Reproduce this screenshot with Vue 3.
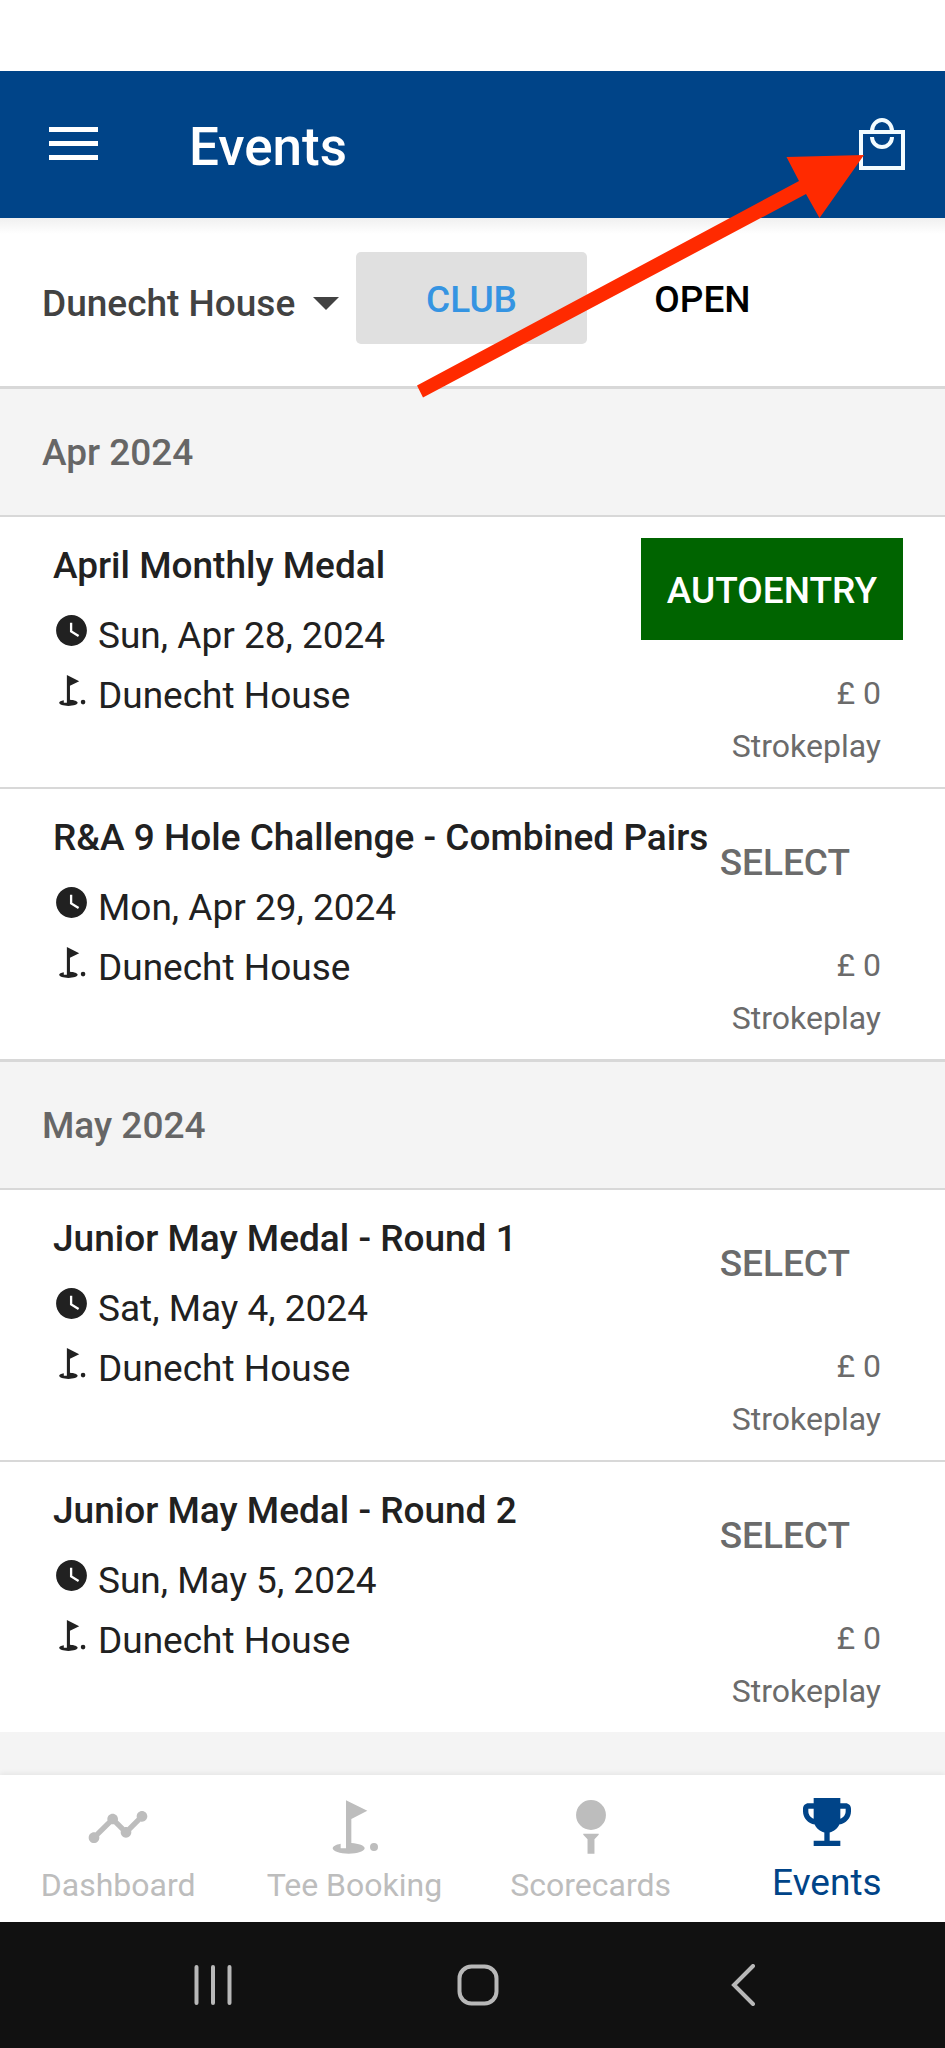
<script setup>
import { ref } from 'vue'

const course = ref('Dunecht House')
const scope = ref('CLUB')
const scopes = ['CLUB', 'OPEN']

const months = [
  {
    label: 'Apr 2024',
    events: [
      { title: 'April Monthly Medal', date: 'Sun, Apr 28, 2024', action: 'AUTOENTRY' },
      { title: 'R&A 9 Hole Challenge - Combined Pairs', date: 'Mon, Apr 29, 2024', action: 'SELECT' },
    ],
  },
  {
    label: 'May 2024',
    events: [
      { title: 'Junior May Medal - Round 1', date: 'Sat, May 4, 2024', action: 'SELECT' },
      { title: 'Junior May Medal - Round 2', date: 'Sun, May 5, 2024', action: 'SELECT' },
    ],
  },
]

const flagPath =
  'M17 5.92 9 2v18H7v-1.73c-1.79.35-3 .99-3 1.73 0 1.1 2.69 2 6 2s6-.9 6-2c0-.99-2.16-1.81-5-1.97V8.98l6-3.06zM19.5 18a1.5 1.5 0 1 0 0 3 1.5 1.5 0 0 0 0-3z'
const clockPath =
  'M12 2C6.5 2 2 6.5 2 12s4.5 10 10 10 10-4.5 10-10S17.5 2 12 2zm4.2 14.2L11 13V7h1.5v5.2l4.5 2.7-.8 1.3z'

const tabs = [
  {
    label: 'Dashboard',
    path: 'M23 8c0 1.1-.9 2-2 2-.18 0-.35-.02-.51-.07l-3.56 3.55c.05.16.07.34.07.52 0 1.1-.9 2-2 2s-2-.9-2-2c0-.18.02-.36.07-.52l-2.55-2.55c-.16.05-.34.07-.52.07s-.36-.02-.52-.07l-4.55 4.56c.05.16.07.33.07.51 0 1.1-.9 2-2 2s-2-.9-2-2 .9-2 2-2c.18 0 .35.02.51.07l4.56-4.55C8.02 9.36 8 9.18 8 9c0-1.1.9-2 2-2s2 .9 2 2c0 .18-.02.36-.07.52l2.55 2.55c.16-.05.34-.07.52-.07s.36.02.52.07l3.55-3.56C19.02 8.35 19 8.18 19 8c0-1.1.9-2 2-2s2 .9 2 2z',
  },
  { label: 'Tee Booking', path: flagPath },
  {
    label: 'Scorecards',
    path: 'M12 1.9a5.6 5.6 0 1 0 0 11.2 5.6 5.6 0 0 0 0-11.2zM9.1 14.5h5.8v.4l-1.6 1.7V22h-2.6v-5.4l-1.6-1.7z',
  },
  {
    label: 'Events',
    active: true,
    path: 'M19 5h-2V3H7v2H5c-1.1 0-2 .9-2 2v1c0 2.55 1.92 4.63 4.39 4.94.63 1.5 1.98 2.63 3.61 2.96V19H7v2h10v-2h-4v-3.1c1.63-.33 2.98-1.46 3.61-2.96C19.08 12.63 21 10.55 21 8V7c0-1.1-.9-2-2-2zM5 8V7h2v3.82C5.84 10.4 5 9.3 5 8zm14 0c0 1.3-.84 2.4-2 2.82V7h2v1z',
  },
]
</script>

<template>
  <div class="screen">
    <header class="appbar">
      <button class="icon-btn" aria-label="Menu">
        <svg width="49" height="33" viewBox="0 0 49 33" fill="#fff">
          <path d="M0 0h49v5H0zM0 14h49v5H0zM0 28h49v5H0z" />
        </svg>
      </button>
      <h1>Events</h1>
      <button class="icon-btn" aria-label="Basket">
        <svg width="46" height="52" viewBox="0 0 46 52" fill="none" stroke="#f2fcff" stroke-width="4">
          <path d="M2 14h42v36H2z" />
          <path d="M13 13a10 11 0 0 1 20 0M13 19a10 10 0 0 0 20 0" />
        </svg>
      </button>
    </header>

    <div class="filters">
      <div class="picker">
        <select v-model="course" aria-label="Course">
          <option>Dunecht House</option>
        </select>
        <svg width="26" height="13" viewBox="0 0 26 13" fill="#424242"><path d="M0 0h26L13 13z" /></svg>
      </div>
      <button
        v-for="s in scopes"
        :key="s"
        class="scope"
        :class="{ on: s === scope }"
        :aria-pressed="s === scope"
        @click="scope = s"
      >{{ s }}</button>
    </div>

    <main>
      <section v-for="m in months" :key="m.label">
        <h2>{{ m.label }}</h2>
        <ul>
          <li v-for="e in m.events" :key="e.title">
            <div class="info">
              <h3>{{ e.title }}</h3>
              <p>
                <svg width="37" height="37" viewBox="0 0 24 24" fill="currentColor"><path :d="clockPath" /></svg>
                {{ e.date }}
              </p>
              <p>
                <svg width="37" height="37" viewBox="0 0 24 24" fill="currentColor"><path :d="flagPath" /></svg>
                {{ course }}
              </p>
            </div>
            <div class="side">
              <button class="action" :class="{ auto: e.action === 'AUTOENTRY' }">{{ e.action }}</button>
              <span class="meta">£ 0</span>
              <span class="meta">Strokeplay</span>
            </div>
          </li>
        </ul>
      </section>
    </main>

    <nav class="tabs">
      <a v-for="t in tabs" :key="t.label" href="#" :class="{ active: t.active }">
        <svg width="64" height="64" viewBox="0 0 24 24" fill="currentColor"><path :d="t.path" /></svg>
        <span>{{ t.label }}</span>
      </a>
    </nav>

    <div class="system">
      <button aria-label="Recent apps">
        <svg width="38" height="42" viewBox="0 0 38 42" fill="none" stroke="#b8b8b8" stroke-width="4" stroke-linecap="round">
          <path d="M2.500 3v36M19 3v36M35.500 3v36" />
        </svg>
      </button>
      <button aria-label="Home">
        <svg width="42" height="42" viewBox="0 0 42 42" fill="none" stroke="#b8b8b8" stroke-width="4">
          <rect x="2.500" y="2.500" width="37" height="37" rx="12" />
        </svg>
      </button>
      <button aria-label="Back">
        <svg width="24" height="42" viewBox="0 0 24 42" fill="none" stroke="#b8b8b8" stroke-width="4" stroke-linecap="round">
          <path d="M22 2 3 21l19 19" />
        </svg>
      </button>
    </div>

    <svg class="pointer" width="448" height="243" viewBox="0 0 448 243" fill="#ff2a00" aria-hidden="true">
      <path d="M0 230.500 382 26 369.500 2 447 0 402.500 63 389 39 6 242.500z" />
    </svg>
  </div>
</template>

<style>
body {
  margin: 0;
}
</style>

<style scoped>
.screen {
  position: relative;
  display: flex;
  flex-direction: column;
  min-height: 100vh;
  box-sizing: border-box;
  padding-top: 71px;
  background: #fff;
  color: #212121;
  font-family: Roboto, "Liberation Sans", sans-serif;
  font-size: 37px;
}
h1,
h2,
h3,
p,
ul {
  margin: 0;
  padding: 0;
}
button,
select {
  margin: 0;
  padding: 0;
  border: 0;
  background: none;
  color: inherit;
  font: inherit;
}
svg {
  display: block;
  flex: none;
}
.appbar {
  display: flex;
  align-items: center;
  height: 145px;
  padding: 0 40px 2px 49px;
  background: #004488;
  color: #fff;
}
.appbar h1 {
  flex: 1;
  padding: 6px 0 0 91px;
  font-size: 53px;
  font-weight: 500;
  line-height: 60px;
}
.filters {
  display: flex;
  align-items: flex-start;
  padding: 34px 42px 32px;
  background: linear-gradient(#f0f0f0, #fff 16px);
}
.picker {
  display: flex;
  align-items: center;
  margin-right: 17px;
  color: #424242;
}
.picker select {
  appearance: none;
  height: 102px;
  padding-right: 43px;
  font-weight: 500;
}
.picker svg {
  margin-left: -26px;
  pointer-events: none;
}
.scope {
  width: 231px;
  height: 92px;
  padding-top: 2px;
  border-radius: 5px;
  color: #000;
  font-weight: 500;
}
.scope.on {
  background: #e0e0e0;
  color: #3594e2;
}
main {
  flex: 1;
  background: #f4f4f4;
}
h2 {
  padding: 34px 42px 32px;
  border-top: 3px solid #d8d8d8;
  border-bottom: 2px solid #d8d8d8;
  color: #666;
  font-size: 37px;
  font-weight: 500;
  line-height: 60px;
}
ul {
  list-style: none;
}
li {
  display: flex;
  padding: 0 42px 0 53px;
  background: #fff;
}
li + li {
  border-top: 2px solid #d8d8d8;
}
.info {
  flex: 1;
  min-width: 0;
  padding-top: 19px;
  line-height: 60px;
}
h3 {
  margin-bottom: 10px;
  font-size: 37px;
  font-weight: 500;
  white-space: nowrap;
}
.info p {
  display: flex;
  gap: 8px;
}
.info svg {
  margin-top: 6px;
}
.side {
  display: flex;
  flex-direction: column;
  align-items: flex-end;
  padding: 21px 0 14px;
}
.action {
  height: 102px;
  margin-bottom: 27px;
  padding: 2px 53px 0 16px;
  color: #6b6b6b;
  font-weight: 500;
}
.action.auto {
  padding: 2px 26px 0;
  background: #006400;
  color: #fff;
}
.meta {
  padding-right: 22px;
  color: #6b6b6b;
  font-size: 32px;
  line-height: 53px;
}
.tabs {
  position: relative;
  display: flex;
  height: 147px;
  background: #fff;
  box-shadow: 0 -2px 5px rgba(0, 0, 0, 0.06);
}
.tabs a {
  flex: 1 1 0;
  display: flex;
  flex-direction: column;
  align-items: center;
  justify-content: flex-end;
  box-sizing: border-box;
  padding-bottom: 11px;
  color: #bdbdbd;
  font-size: 32px;
  line-height: 52px;
  text-decoration: none;
}
.tabs a.active {
  color: #004488;
  font-size: 37px;
  line-height: 57px;
}
.system {
  display: flex;
  height: 126px;
  padding: 0 70px 0 81px;
  background: #111;
}
.system button {
  flex: 1 1 0;
  display: flex;
  align-items: center;
  justify-content: center;
}
.pointer {
  position: absolute;
  top: 155px;
  right: 80px;
}
</style>
